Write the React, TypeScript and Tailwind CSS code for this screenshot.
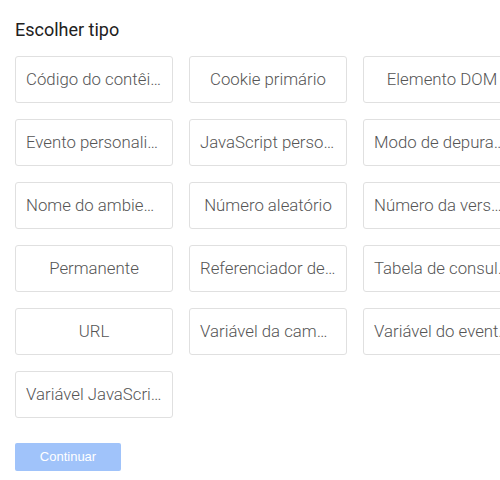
const items = [
  'Código do contêiner',
  'Cookie primário',
  'Elemento DOM',
  'Evento personalizado',
  'JavaScript personalizado',
  'Modo de depuração',
  'Nome do ambiente',
  'Número aleatório',
  'Número da versão do contêiner',
  'Permanente',
  'Referenciador de HTTP',
  'Tabela de consulta',
  'URL',
  'Variável da camada de dados',
  'Variável do evento automático',
  'Variável JavaScript',
]

export default function App() {
  return (
    <div className="h-[480px] w-[500px] overflow-hidden bg-white px-[15px] pt-[19px] font-['Roboto',sans-serif]">
      <h2 className="text-[18px] leading-[22px] text-[#212121]">Escolher tipo</h2>
      <div className="mt-[15px] grid w-[540px] grid-cols-[158px_158px_158px] gap-x-[16px] gap-y-[16px]">
        {items.map((label) => (
          <div
            key={label}
            className="h-[47px] truncate rounded-[3px] border border-[#e0e0e0] px-[10px] text-center text-[16.8px] leading-[45px] font-light text-[#555]"
          >
            {label}
          </div>
        ))}
      </div>
      <button className="mt-[25px] h-[28px] w-[106px] rounded-[2px] bg-[#a0c3fa] font-['Liberation_Sans',Arial,sans-serif] text-[13px] text-white">
        Continuar
      </button>
    </div>
  )
}
